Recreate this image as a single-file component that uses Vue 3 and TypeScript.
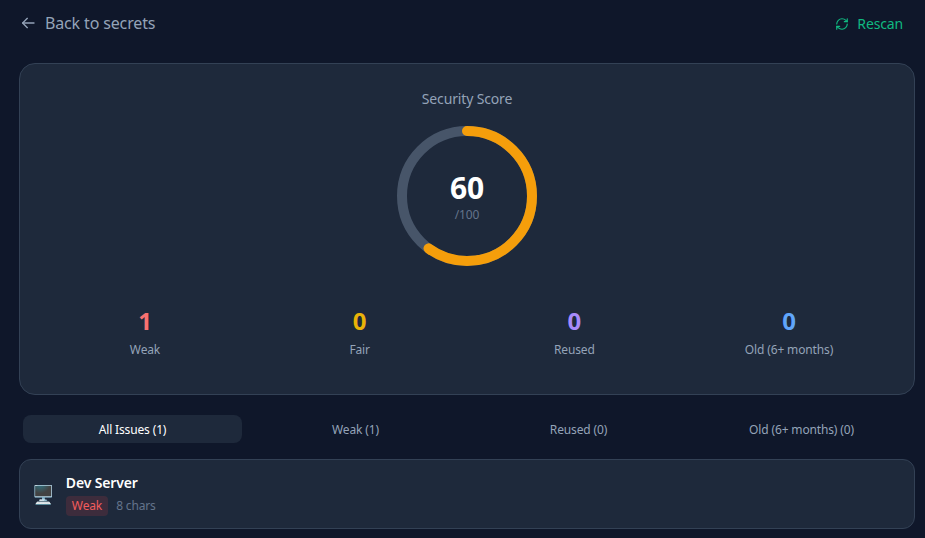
<script setup lang="ts">
const stats = [
  { value: 1, label: 'Weak', color: '#f87171' },
  { value: 0, label: 'Fair', color: '#eab308' },
  { value: 0, label: 'Reused', color: '#a78bfa' },
  { value: 0, label: 'Old (6+ months)', color: '#60a5fa' },
]
const tabs = ['All Issues (1)', 'Weak (1)', 'Reused (0)', 'Old (6+ months) (0)']
const r = 65
const c = 2 * Math.PI * r
const dash = `${c * 0.6} ${c}`
</script>

<template>
  <div class="page">
    <header class="top">
      <button class="back">
        <svg width="16" height="16" viewBox="0 0 24 24" fill="none" stroke="currentColor" stroke-width="2" stroke-linecap="round" stroke-linejoin="round"><path d="M21 12H4" /><path d="M11 19l-7-7 7-7" /></svg>
        <span>Back to secrets</span>
      </button>
      <button class="rescan">
        <svg width="14" height="14" viewBox="0 0 24 24" fill="none" stroke="currentColor" stroke-width="2" stroke-linecap="round" stroke-linejoin="round"><path d="M3 12a9 9 0 0 1 9-9 9.75 9.75 0 0 1 6.74 2.74L21 8" /><path d="M21 3v5h-5" /><path d="M21 12a9 9 0 0 1-9 9 9.75 9.75 0 0 1-6.74-2.74L3 16" /><path d="M8 16H3v5" /></svg>
        <span>Rescan</span>
      </button>
    </header>

    <section class="card score">
      <div class="score-title">Security Score</div>
      <div class="ring">
        <svg width="140" height="140" viewBox="0 0 140 140">
          <circle cx="70" cy="70" :r="r" fill="none" stroke="#475569" stroke-width="10" />
          <circle cx="70" cy="70" :r="r" fill="none" stroke="#f59e0b" stroke-width="10" stroke-linecap="round" :stroke-dasharray="dash" transform="rotate(-90 70 70)" />
        </svg>
        <div class="ring-text">
          <div class="num">60</div>
          <div class="den">/100</div>
        </div>
      </div>
      <div class="stats">
        <div v-for="s in stats" :key="s.label" class="stat">
          <div class="stat-val" :style="{ color: s.color }">{{ s.value }}</div>
          <div class="stat-label">{{ s.label }}</div>
        </div>
      </div>
    </section>

    <nav class="tabs">
      <div v-for="(t, i) in tabs" :key="t" class="tab" :class="{ active: i === 0 }">{{ t }}</div>
    </nav>

    <section class="card issue">
      <span class="emoji">🖥️</span>
      <div>
        <div class="name">Dev Server</div>
        <div class="meta">
          <span class="badge">Weak</span>
          <span class="chars">8 chars</span>
        </div>
      </div>
    </section>
  </div>
</template>

<style>
html, body { background: #0f172a; }
</style>

<style scoped>
.page {
  box-sizing: border-box;
  width: 925px;
  height: 538px;
  overflow: hidden;
  padding: 0 10px 0 19px;
  background: #0f172a;
  font-family: "Noto Sans", sans-serif;
  letter-spacing: -0.009em;
}
.top {
  display: flex;
  justify-content: space-between;
  align-items: center;
  height: 47px;
}
button {
  background: none;
  border: 0;
  font-family: inherit;
  letter-spacing: inherit;
  display: flex;
  align-items: center;
  padding: 0;
}
.back {
  gap: 9px;
  margin-left: 1px;
  margin-bottom: 1px;
  font-size: 16px;
  color: #94a3b8;
}
.rescan {
  gap: 8px;
  margin-right: 12px;
  font-size: 14px;
  color: #10b981;
}
.card {
  box-sizing: border-box;
  background: #1e293b;
  border: 1px solid #334155;
}
.score {
  margin-top: 16px;
  height: 332px;
  border-radius: 16px;
  padding: 25px 24px 24px;
  display: flex;
  flex-direction: column;
  align-items: center;
}
.score-title {
  font-size: 14px;
  line-height: 20px;
  color: #94a3b8;
  margin-bottom: 17px;
}
.ring {
  position: relative;
  width: 140px;
  height: 140px;
}
.ring svg { display: block; }
.ring-text {
  position: absolute;
  inset: 0;
  display: flex;
  flex-direction: column;
  align-items: center;
  justify-content: center;
}
.num {
  font-size: 30px;
  line-height: 36px;
  font-weight: 700;
  color: #fff;
}
.den {
  font-size: 12px;
  line-height: 16px;
  margin-top: 1px;
  color: #64748b;
}
.stats {
  align-self: stretch;
  display: grid;
  grid-template-columns: repeat(4, 1fr);
  gap: 12.67px;
  margin-top: 39px;
}
.stat { text-align: center; }
.stat-val {
  font-size: 24px;
  line-height: 32px;
  font-weight: 700;
}
.stat-label {
  font-size: 12px;
  line-height: 16px;
  margin-top: 5px;
  color: #94a3b8;
}
.tabs {
  display: grid;
  grid-template-columns: repeat(4, 1fr);
  gap: 4px;
  padding: 0 4px;
  margin-top: 20px;
}
.tab {
  height: 28px;
  line-height: 29px;
  border-radius: 8px;
  text-align: center;
  font-size: 12px;
  color: #94a3b8;
}
.tab.active {
  background: #1e293b;
  color: #fff;
}
.issue {
  margin-top: 16px;
  height: 70px;
  border-radius: 12px;
  padding: 0 12px;
  display: flex;
  align-items: center;
  gap: 12px;
}
.emoji {
  font-size: 18px;
  line-height: 28px;
}
.name {
  font-size: 14px;
  line-height: 20px;
  font-weight: 600;
  color: #fff;
}
.meta {
  display: flex;
  align-items: center;
  gap: 8px;
  margin-top: 3px;
}
.badge {
  font-size: 12px;
  line-height: 16px;
  padding: 2px 6px;
  border-radius: 4px;
  color: #f25c5c;
  background: rgba(239, 68, 68, 0.15);
}
.chars {
  font-size: 12px;
  color: #64748b;
}
</style>
